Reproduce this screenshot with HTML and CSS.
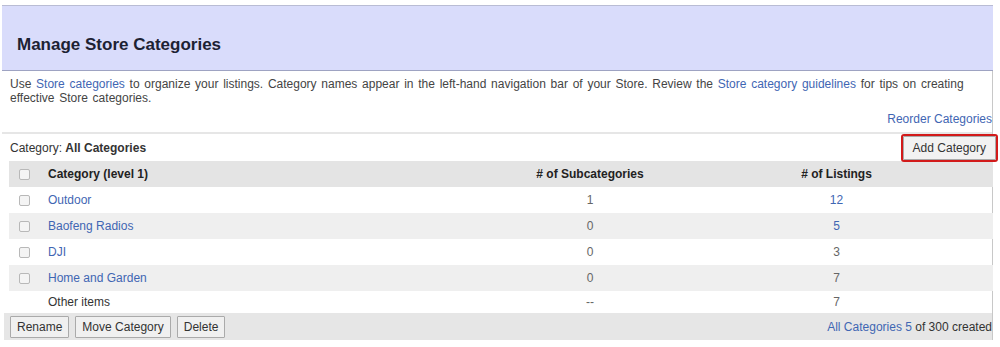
FILE: index.html
```html
<!DOCTYPE html>
<html lang="en">
<head>
    <meta charset="UTF-8">
    <title>Manage Store Categories</title>
    <link rel="stylesheet" href="styles.css">
</head>
<body>

<div class="panel">
    <div class="panel-head">
        <h1>Manage Store Categories</h1>
    </div>

    <div class="panel-body">
        <p class="intro">
            Use <a href="#">Store categories</a> to organize your listings. Category names appear in the left-hand navigation bar of your Store. Review the <a href="#">Store category guidelines</a> for tips on creating<br>
            effective Store categories.
        </p>
        <div class="reorder"><a href="#">Reorder Categories</a></div>

        <div class="toolbar">
            <span>Category: <b>All Categories</b></span>
            <button class="btn btn-add">Add Category</button>
        </div>

        <table class="cat-table">
            <thead>
                <tr>
                    <th class="col-check"><span class="check"></span></th>
                    <th class="col-name">Category (level 1)</th>
                    <th class="col-num col-subs">#&nbsp;of Subcategories</th>
                    <th class="col-num col-listings">#&nbsp;of Listings</th>
                </tr>
            </thead>
            <tbody>
                <tr>
                    <td class="col-check"><span class="check"></span></td>
                    <td class="col-name"><a href="#">Outdoor</a></td>
                    <td class="col-num">1</td>
                    <td class="col-num col-listings"><a href="#">12</a></td>
                </tr>
                <tr>
                    <td class="col-check"><span class="check"></span></td>
                    <td class="col-name"><a href="#">Baofeng Radios</a></td>
                    <td class="col-num">0</td>
                    <td class="col-num col-listings"><a href="#">5</a></td>
                </tr>
                <tr>
                    <td class="col-check"><span class="check"></span></td>
                    <td class="col-name"><a href="#">DJI</a></td>
                    <td class="col-num">0</td>
                    <td class="col-num col-listings">3</td>
                </tr>
                <tr>
                    <td class="col-check"><span class="check"></span></td>
                    <td class="col-name"><a href="#">Home and Garden</a></td>
                    <td class="col-num">0</td>
                    <td class="col-num col-listings">7</td>
                </tr>
                <tr class="row-other">
                    <td class="col-check"></td>
                    <td class="col-name">Other items</td>
                    <td class="col-num">--</td>
                    <td class="col-num col-listings">7</td>
                </tr>
            </tbody>
        </table>

        <div class="footer">
            <div class="actions">
                <button class="btn">Rename</button>
                <button class="btn">Move Category</button>
                <button class="btn">Delete</button>
            </div>
            <div class="count"><a href="#">All Categories</a> <a href="#">5</a> of <b>300</b> created</div>
        </div>
    </div>
</div>

</body>
</html>
```

FILE: styles.css
```css
* {
    box-sizing: border-box;
}

body {
    margin: 0;
    font-family: "Liberation Sans", Arial, sans-serif;
    font-size: 12px;
    color: #333;
    background: #fff;
}

a {
    color: #3f66b3;
    text-decoration: none;
}

.panel {
    width: 991px;
    margin: 5px 0 0 2px;
}

/* lavender title bar */
.panel-head {
    height: 66px;
    background-color: #d9dcfb;
    border-top: 1px solid #b9bcd4;
    border-bottom: 1px solid #9ea3c2;
    padding: 29px 0 0 15px;
}

.panel-head h1 {
    margin: 0;
    font-size: 17px;
    color: #1d2233;
}

.panel-body {
    border-right: 1px solid #c8c8c8;
}

.intro {
    margin: 0;
    padding: 6px 8px 0;
    font-size: 12px;
    line-height: 14px;
    word-spacing: 1.4px;
    color: #444;
}

.reorder {
    text-align: right;
    font-size: 12px;
    padding: 7px 0 6px;
    border-bottom: 2px solid #e6e6e6;
}

.toolbar {
    display: flex;
    justify-content: space-between;
    align-items: center;
    height: 27px;
    padding-left: 8px;
}

.btn {
    font-family: inherit;
    font-size: 12px;
    color: #333;
    background: #f0f0f0;
    border: 1px solid #aaa;
    padding: 3px 6px;
    border-radius: 1px;
}

.btn-add {
    outline: 2px solid #d21a1a;
    background: #f2f2f2;
    padding: 4px 9px;
    margin-right: -4px;
}

.cat-table {
    width: 984px;
    margin-left: 7px;
    border-collapse: collapse;
}

.cat-table th,
.cat-table td {
    height: 26px;
    padding: 0;
}

.cat-table .row-other td {
    height: 22px;
}

.cat-table thead tr {
    background-color: #e4e4e4;
}

.cat-table th {
    font-weight: bold;
    color: #222;
}

.cat-table tbody tr:nth-child(even) {
    background-color: #efefef;
}

.col-check {
    width: 39px;
    text-align: left;
    padding-left: 10px !important;
}

.col-name {
    text-align: left;
    width: 402px;
}

.col-num {
    text-align: center;
    color: #666;
}

.col-subs {
    width: 280px;
}

.col-listings {
    padding-right: 50px !important;
}

.check {
    display: inline-block;
    width: 11px;
    height: 11px;
    border: 1px solid #b8b8b8;
    border-radius: 2px;
    background: #f4f4f4;
    vertical-align: middle;
}

.footer {
    display: flex;
    justify-content: space-between;
    align-items: center;
    height: 27px;
    background-color: #e6e6e6;
    padding: 0 0 0 6px;
    margin-left: 2px;
}

.actions {
    display: flex;
    gap: 6px;
}

.count b {
    font-weight: normal;
    color: #333;
}
```
